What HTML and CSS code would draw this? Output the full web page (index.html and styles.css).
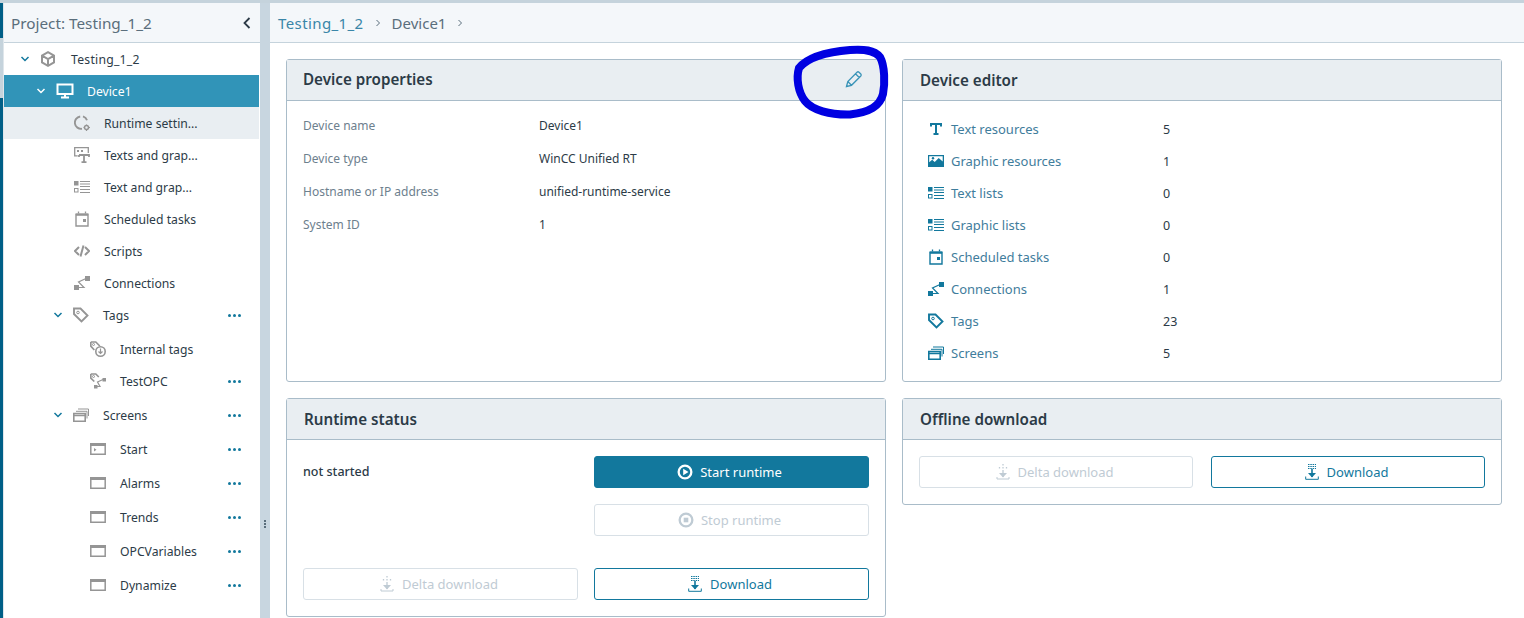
FILE: index.html
```html
<!DOCTYPE html>
<html lang="en">
<head>
    <meta charset="UTF-8">
    <title>Device1</title>
    <link rel="stylesheet" href="styles.css">
</head>
<body>
    <svg width="0" height="0" class="defs">
        <defs>
            <symbol id="i-chev" viewBox="0 0 10 10"><path d="M1.500 3 5 6.500 8.500 3" fill="none" stroke="currentColor" stroke-width="1.500"/></symbol>
            <symbol id="i-cube" viewBox="0 0 16 16"><path d="M8 1.200 14 4.500V11.500L8 14.800 2 11.500V4.500ZM2.500 4.800 8 8l5.500-3.200M8 8v6.500" fill="none" stroke="currentColor" stroke-width="2"/></symbol>
            <symbol id="i-monitor" viewBox="0 0 18 16"><path d="M1.500 1.500h15v9.500h-15ZM9 11v3M5 14.500h8" fill="none" stroke="currentColor" stroke-width="2"/></symbol>
            <symbol id="i-runtime" viewBox="0 0 16 16"><path d="M6.200 1.500a6.200 6.200 0 0 0 1.800 12.300M9 1.300a6 6 0 0 1 4 4" fill="none" stroke="currentColor" stroke-width="1.900"/><circle cx="12.500" cy="12.500" r="2" fill="none" stroke="currentColor" stroke-width="1.500"/><path d="M12.500 9.500v1M12.500 14.500v1.500M9.500 12.500h1M14.500 12.500h1.500" stroke="currentColor" stroke-width="1.200"/></symbol>
            <symbol id="i-textgfx" viewBox="0 0 16 16"><path d="M.7 9.500V.7h13.600V6M.7 8.800h3" fill="none" stroke="currentColor" stroke-width="1.300"/><rect x="3" y="3" width="2" height="2" fill="currentColor"/><rect x="7" y="3" width="2" height="2" fill="currentColor"/><path d="M5 8h10v2M5 8v2M10 8v7M7.500 15.200h5" fill="none" stroke="currentColor" stroke-width="1.800"/></symbol>
            <symbol id="i-list" viewBox="0 0 16 12"><rect x="0" y="0" width="4.500" height="4.500" fill="currentColor"/><rect x=".5" y="7.500" width="3.500" height="3.500" fill="none" stroke="currentColor"/><path d="M6 .5h10M6 3h10M6 5.500h10M6 8.500h10M6 11.500h10" stroke="currentColor"/></symbol>
            <symbol id="i-calendar" viewBox="0 0 16 16"><path d="M2 4h12v11H2Z" fill="none" stroke="currentColor" stroke-width="1.400"/><path d="M1.500 3.200h13" stroke="currentColor" stroke-width="1.800"/><path d="M4.500 .5v2M11.500 .5v2" stroke="currentColor" stroke-width="1.300"/><rect x="9" y="8" width="3" height="3" fill="currentColor"/></symbol>
            <symbol id="i-code" viewBox="0 0 16 16"><path d="M5 4 1 8l4 4M11 4l4 4-4 4M9.500 2.500 6.500 13.500" fill="none" stroke="currentColor" stroke-width="2"/></symbol>
            <symbol id="i-conn" viewBox="0 0 16 16"><rect x="0" y="10" width="5" height="5" fill="currentColor"/><rect x="11" y="1" width="5" height="5" fill="currentColor"/><path d="M4 12.500h6L4.500 7 12 3.500" fill="none" stroke="currentColor" stroke-width="1.200"/></symbol>
            <symbol id="i-tag" viewBox="0 0 16 16"><path d="M1 1.500h6.500l7 7-6 6-7.500-7.500Z" fill="none" stroke="currentColor" stroke-width="1.900"/><circle cx="5" cy="5.500" r="1.300" fill="none" stroke="currentColor"/></symbol>
            <symbol id="i-tagdown" viewBox="0 0 16 16"><path d="M.8 1h5l4 4M.8 1v4l3.500 4" fill="none" stroke="currentColor" stroke-width="1.700"/><circle cx="3.500" cy="3.500" r="1" fill="none" stroke="currentColor"/><circle cx="10.500" cy="10.500" r="4.700" fill="none" stroke="currentColor" stroke-width="1.600"/><path d="M10.500 7.500v5M8.500 10.500l2 2 2-2" fill="none" stroke="currentColor" stroke-width="1.200"/></symbol>
            <symbol id="i-tagconn" viewBox="0 0 16 16"><path d="M.8 1h5l3 3M.8 1v4l3.500 3.500" fill="none" stroke="currentColor" stroke-width="1.700"/><circle cx="3.500" cy="3.500" r="1" fill="none" stroke="currentColor"/><rect x="4" y="12" width="3.500" height="3.500" fill="currentColor"/><rect x="12.500" y="5" width="3.500" height="3.500" fill="currentColor"/><path d="M7 13.500h3L7.500 9 13 6.500" fill="none" stroke="currentColor" stroke-width="1.200"/></symbol>
            <symbol id="i-screens" viewBox="0 0 16 14"><path d="M.8 5.500h11.400v7.700H.8ZM.8 7.500h11.400" fill="none" stroke="currentColor" stroke-width="1.600"/><path d="M3 3.300h11v7.200M5 1h10.500v7" fill="none" stroke="currentColor" stroke-width="1"/></symbol>
            <symbol id="i-screen" viewBox="0 0 16 12"><path d="M.8.800h14.400v10.400H.8Z" fill="none" stroke="currentColor" stroke-width="1.500"/><path d="M0 0h16v3H0Z" fill="currentColor"/></symbol>
            <symbol id="i-screenstart" viewBox="0 0 16 12"><path d="M.8.800h14.400v10.400H.8Z" fill="none" stroke="currentColor" stroke-width="1.500"/><path d="M0 0h16v3H0ZM4 5v3.500L6.500 6.700Z" fill="currentColor"/></symbol>
            <symbol id="i-image" viewBox="0 0 16 12"><path d="M0 0h16v12H0ZM1.200 1.200v6l3-2.500 2.500 2.200 4-3.900 4 3.500V1.200Z" fill="currentColor" fill-rule="evenodd"/><circle cx="5" cy="3.200" r="1.200" fill="currentColor"/></symbol>
            <symbol id="i-t" viewBox="0 0 12 12"><path d="M1 3.500V1h10v2.500M6 1v10M3.500 11h5" fill="none" stroke="currentColor" stroke-width="2"/></symbol>
            <symbol id="i-pencil" viewBox="0 0 18 18"><path d="M1.500 16.500 2.800 11.500 12 2.200a1.500 1.500 0 0 1 2 0l1.800 1.800a1.500 1.500 0 0 1 0 2L6.500 15.300ZM2.800 11.500l3.700 3.800M10.500 3.800l3.700 3.700" fill="none" stroke="currentColor" stroke-width="1.300"/></symbol>
            <symbol id="i-play" viewBox="0 0 16 16"><path fill-rule="evenodd" d="M8 .5a7.500 7.500 0 1 1 0 15A7.500 7.500 0 0 1 8 .5Zm0 2.300a5.200 5.200 0 1 0 0 10.400A5.200 5.200 0 0 0 8 2.800Z" fill="currentColor"/><path d="M6.200 4.800v6.400L11.500 8Z" fill="currentColor"/></symbol>
            <symbol id="i-stop" viewBox="0 0 16 16"><path fill-rule="evenodd" d="M8 .5a7.500 7.500 0 1 1 0 15A7.500 7.500 0 0 1 8 .5Zm0 2.300a5.200 5.200 0 1 0 0 10.400A5.200 5.200 0 0 0 8 2.800Z" fill="currentColor"/><rect x="5.700" y="5.700" width="4.600" height="4.600" fill="currentColor"/></symbol>
            <symbol id="i-delta" viewBox="0 0 14 16"><path d="M7 0v1.500M7 3v1.500M3.500 3v1.500M10.500 3v1.500M7 6v7" stroke="currentColor" stroke-width="1.300" fill="none"/><path d="M3 9l4 4.500L11 9Z" fill="currentColor"/><path d="M1 13v2h12v-2" stroke="currentColor" fill="none"/></symbol>
            <symbol id="i-download" viewBox="0 0 14 16"><path d="M3 .5h8M3 2.500h8M3 4.500h8" stroke="currentColor" stroke-dasharray="1.500 .8" fill="none"/><path d="M7 5v8" stroke="currentColor" stroke-width="1.600" fill="none"/><path d="M3 9l4 4.500L11 9Z" fill="currentColor"/><path d="M.7 12.500v2.800h12.600v-2.800" stroke="currentColor" fill="none"/></symbol>
        </defs>
    </svg>

    <div class="app">
        <div class="strip"></div>
        <aside class="sidebar">
            <div class="side-head">
                <span>Project: Testing_1_2</span>
                <svg class="collapse" width="8" height="12" viewBox="0 0 8 12"><path d="M6.500 1 1.500 6l5 5" fill="none" stroke="currentColor" stroke-width="1.800"/></svg>
            </div>
            <div class="tree">
                <div class="row lvl-0"><svg class="chev"><use href="#i-chev"/></svg><svg class="ico ico-cube"><use href="#i-cube"/></svg><span class="name">Testing_1_2</span></div>
                <div class="row lvl-1 selected"><svg class="chev"><use href="#i-chev"/></svg><svg class="ico ico-monitor"><use href="#i-monitor"/></svg><span class="name">Device1</span></div>
                <div class="row lvl-2 hover"><svg class="ico"><use href="#i-runtime"/></svg><span class="name">Runtime settin...</span></div>
                <div class="row lvl-2"><svg class="ico"><use href="#i-textgfx"/></svg><span class="name">Texts and grap...</span></div>
                <div class="row lvl-2"><svg class="ico"><use href="#i-list"/></svg><span class="name">Text and grap...</span></div>
                <div class="row lvl-2"><svg class="ico"><use href="#i-calendar"/></svg><span class="name">Scheduled tasks</span></div>
                <div class="row lvl-2"><svg class="ico"><use href="#i-code"/></svg><span class="name">Scripts</span></div>
                <div class="row lvl-2"><svg class="ico"><use href="#i-conn"/></svg><span class="name">Connections</span></div>
                <div class="row lvl-2b"><svg class="chev"><use href="#i-chev"/></svg><svg class="ico"><use href="#i-tag"/></svg><span class="name">Tags</span><span class="dots"><i></i><i></i><i></i></span></div>
                <div class="row lvl-3 h36"><svg class="ico"><use href="#i-tagdown"/></svg><span class="name">Internal tags</span></div>
                <div class="row lvl-3 h31"><svg class="ico"><use href="#i-tagconn"/></svg><span class="name">TestOPC</span><span class="dots"><i></i><i></i><i></i></span></div>
                <div class="row lvl-2b h34"><svg class="chev"><use href="#i-chev"/></svg><svg class="ico"><use href="#i-screens"/></svg><span class="name">Screens</span><span class="dots"><i></i><i></i><i></i></span></div>
                <div class="row lvl-3 h34"><svg class="ico"><use href="#i-screenstart"/></svg><span class="name">Start</span><span class="dots"><i></i><i></i><i></i></span></div>
                <div class="row lvl-3 h34"><svg class="ico"><use href="#i-screen"/></svg><span class="name">Alarms</span><span class="dots"><i></i><i></i><i></i></span></div>
                <div class="row lvl-3 h34"><svg class="ico"><use href="#i-screen"/></svg><span class="name">Trends</span><span class="dots"><i></i><i></i><i></i></span></div>
                <div class="row lvl-3 h34"><svg class="ico"><use href="#i-screen"/></svg><span class="name">OPCVariables</span><span class="dots"><i></i><i></i><i></i></span></div>
                <div class="row lvl-3 h34"><svg class="ico"><use href="#i-screen"/></svg><span class="name">Dynamize</span><span class="dots"><i></i><i></i><i></i></span></div>
            </div>
        </aside>

        <div class="splitter"><span class="grip"><i></i><i></i><i></i></span></div>

        <main class="main">
            <div class="crumbs">
                <span class="crumb-link">Testing_1_2</span>
                <svg class="crumb-sep" viewBox="0 0 6 8"><path d="M1.500 1 4.500 4l-3 3" fill="none" stroke="currentColor"/></svg>
                <span class="crumb-cur">Device1</span>
                <svg class="crumb-sep" viewBox="0 0 6 8"><path d="M1.500 1 4.500 4l-3 3" fill="none" stroke="currentColor"/></svg>
            </div>

            <div class="panels">
                <section class="panel">
                    <header class="panel-head head-props">
                        <h2>Device properties</h2>
                        <svg class="edit"><use href="#i-pencil"/></svg>
                    </header>
                    <dl class="props">
                        <dt>Device name</dt><dd>Device1</dd>
                        <dt>Device type</dt><dd>WinCC Unified RT</dd>
                        <dt>Hostname or IP address</dt><dd>unified-runtime-service</dd>
                        <dt>System ID</dt><dd>1</dd>
                    </dl>
                </section>

                <section class="panel">
                    <header class="panel-head head-right"><h2>Device editor</h2></header>
                    <ul class="editor">
                        <li><svg class="ed-ico ed-t"><use href="#i-t"/></svg><a>Text resources</a><span>5</span></li>
                        <li><svg class="ed-ico"><use href="#i-image"/></svg><a>Graphic resources</a><span>1</span></li>
                        <li><svg class="ed-ico"><use href="#i-list"/></svg><a>Text lists</a><span>0</span></li>
                        <li><svg class="ed-ico"><use href="#i-list"/></svg><a>Graphic lists</a><span>0</span></li>
                        <li><svg class="ed-ico"><use href="#i-calendar"/></svg><a>Scheduled tasks</a><span>0</span></li>
                        <li><svg class="ed-ico"><use href="#i-conn"/></svg><a>Connections</a><span>1</span></li>
                        <li><svg class="ed-ico"><use href="#i-tag"/></svg><a>Tags</a><span>23</span></li>
                        <li><svg class="ed-ico"><use href="#i-screens"/></svg><a>Screens</a><span>5</span></li>
                    </ul>
                </section>

                <section class="panel">
                    <header class="panel-head head-right"><h2>Runtime status</h2></header>
                    <div class="runtime">
                        <div class="status">not started</div>
                        <button class="btn primary"><svg><use href="#i-play"/></svg>Start runtime</button>
                        <button class="btn disabled stop"><svg><use href="#i-stop"/></svg>Stop runtime</button>
                        <button class="btn disabled low"><svg><use href="#i-delta"/></svg>Delta download</button>
                        <button class="btn outline low"><svg><use href="#i-download"/></svg>Download</button>
                    </div>
                </section>

                <section class="panel panel-short">
                    <header class="panel-head head-right"><h2>Offline download</h2></header>
                    <div class="offline">
                        <button class="btn disabled"><svg><use href="#i-delta"/></svg>Delta download</button>
                        <button class="btn outline"><svg><use href="#i-download"/></svg>Download</button>
                    </div>
                </section>
            </div>
        </main>
    </div>

    <!-- hand drawn marker around the edit icon -->
    <svg class="scribble" width="1524" height="618" viewBox="0 0 1524 618">
        <path d="M799 68C807 58 826 52 850 50C864 49 874 50 880 57C885 66 885 84 883 94C880 106 870 112 850 114.500C830 115 812 110 805 101C798 92 796 78 799 68Z" fill="none" stroke="#0000e1" stroke-width="8" stroke-linecap="round"/>
    </svg>
</body>
</html>
```

FILE: styles.css
```css
* {
    box-sizing: border-box;
}
html, body {
    margin: 0;
    height: 100%;
}
body {
    font-family: "Noto Sans", Arial, sans-serif;
    font-size: 12.5px;
    color: #2c3b47;
    background-color: #fff;
    overflow: hidden;
    position: relative;
}
.defs {
    position: absolute;
}
.app {
    display: flex;
    height: 618px;
    border-top: 3px solid #c5d3dc;
}
.strip {
    width: 3px;
    flex: none;
    background: linear-gradient(#005f87 35px, #c5d3dc 35px, #c5d3dc 95px, #005f87 95px);
}

/* left tree */
.sidebar {
    width: 257px;
    flex: none;
    border-left: 1px solid #dfe6eb;
}
.side-head {
    height: 40px;
    display: flex;
    align-items: center;
    justify-content: space-between;
    padding: 0 9px 0 7px;
    background-color: #f4f7fa;
    border-bottom: 1px solid #c5d3dc;
    font-size: 15.3px;
    color: #5a6e7c;
}
.collapse {
    color: #2c3b47;
}
.tree {
    padding-right: 1px;
    font-size: 12.2px;
}
.row {
    height: 32px;
    display: flex;
    align-items: center;
    position: relative;
}
.h36 { height: 36px; }
.h31 { height: 31px; padding-bottom: 3px; }
.h34 { height: 34px; }
.chev {
    width: 10px;
    height: 10px;
    color: #12789d;
    flex: none;
}
.ico {
    width: 16px;
    height: 16px;
    color: #959595;
    flex: none;
}
.name {
    margin-left: 14px;
}
.lvl-0 { padding-left: 16px; }
.lvl-0 .ico { margin-left: 10px; }
.lvl-0 .name { margin-left: 15px; letter-spacing: .25px; }
.lvl-1 { padding-left: 32px; }
.lvl-1 .ico { margin-left: 10px; width: 18px; }
.lvl-1 .name { margin-left: 13px; }
.lvl-2 { padding-left: 70px; }
.lvl-2b { padding-left: 49px; }
.lvl-2b .ico { margin-left: 10px; }
.lvl-3 { padding-left: 86px; }
.selected {
    background-color: #3194b8;
    color: #fff;
}
.selected .chev, .selected .ico {
    color: #fff;
}
.hover {
    background-color: #e9eef2;
}
.dots {
    position: absolute;
    left: 224px;
    display: flex;
    gap: 2px;
}
.dots i {
    width: 3px;
    height: 3px;
    border-radius: 50%;
    background-color: #12789d;
}

.splitter {
    width: 10px;
    flex: none;
    background-color: #c8d6e0;
    position: relative;
}
.grip {
    position: absolute;
    left: 4px;
    top: 517px;
    display: flex;
    flex-direction: column;
    gap: 1px;
}
.grip i {
    width: 2px;
    height: 2px;
    background-color: #5a6e7c;
}

/* right side */
.main {
    flex: 1;
    min-width: 0;
}
.crumbs {
    height: 40px;
    display: flex;
    align-items: center;
    padding-left: 8px;
    background-color: #f4f7fa;
    border-bottom: 1px solid #c5d3dc;
    font-size: 15px;
}
.crumb-link {
    color: #3a86a8;
    letter-spacing: .4px;
}
.crumb-cur {
    color: #5a6e7c;
}
.crumb-sep {
    width: 6px;
    height: 8px;
    margin: 0 11px;
    color: #5a6e7c;
}
.panels {
    display: grid;
    grid-template-columns: 600px 600px;
    grid-template-rows: 323px 219px;
    gap: 16px;
    padding: 16px;
}
.panel {
    border: 1px solid #a9bcc9;
    border-radius: 3px;
    background-color: #fff;
}
.panel-short {
    align-self: start;
    height: 107px;
}
.panel-head {
    height: 41px;
    display: flex;
    align-items: center;
    justify-content: space-between;
    padding: 0 16px;
    background-color: #e9eef2;
    border-bottom: 1px solid #a9bcc9;
}
.head-props {
    padding-bottom: 2px;
}
.head-right {
    padding-left: 17px;
}
.panel-head h2 {
    margin: 0;
    font-size: 15.2px;
    font-weight: 600;
    color: #2c3b47;
}
.edit {
    width: 18px;
    height: 18px;
    margin-right: 6px;
    color: #3a94b8;
}
.props {
    display: grid;
    grid-template-columns: 236px 1fr;
    grid-auto-rows: 33px;
    align-items: center;
    margin: 0;
    padding: 8px 16px;
    font-size: 12px;
}
.props dt {
    color: #6d808e;
}
.props dd {
    margin: 0;
}
.editor {
    list-style: none;
    margin: 0;
    padding: 12px 0 0 25px;
}
.editor li {
    height: 32px;
    display: flex;
    align-items: center;
}
.editor a {
    margin-left: 7px;
    width: 212px;
    color: #3f7d9c;
    font-size: 13px;
}
.ed-ico {
    width: 16px;
    height: 16px;
    color: #12789d;
    flex: none;
}
.ed-t {
    width: 12px;
    margin: 0 2px;
}
.runtime {
    display: grid;
    grid-template-columns: 275px 275px;
    grid-template-rows: 32px 32px 32px;
    gap: 16px;
    padding: 16px;
}
.status {
    font-weight: 500;
    padding-top: 7px;
}
.stop {
    grid-column: 2;
}
.low {
    margin-top: 16px;
}
.offline {
    display: grid;
    grid-template-columns: 274px 274px;
    gap: 18px;
    padding: 16px;
}
.btn {
    height: 32px;
    display: flex;
    align-items: center;
    justify-content: center;
    gap: 7px;
    border-radius: 3px;
    font-family: inherit;
    font-size: 13px;
    background-color: #fff;
    border: 1px solid #12789d;
    color: #12789d;
    padding: 0 4px 0 0;
}
.btn svg {
    width: 16px;
    height: 16px;
}
.primary {
    background-color: #12789d;
    color: #fff;
}
.disabled {
    border-color: #d8e0e6;
    color: #bfcbd4;
}

.scribble {
    position: absolute;
    left: 0;
    top: 0;
    pointer-events: none;
}
```
